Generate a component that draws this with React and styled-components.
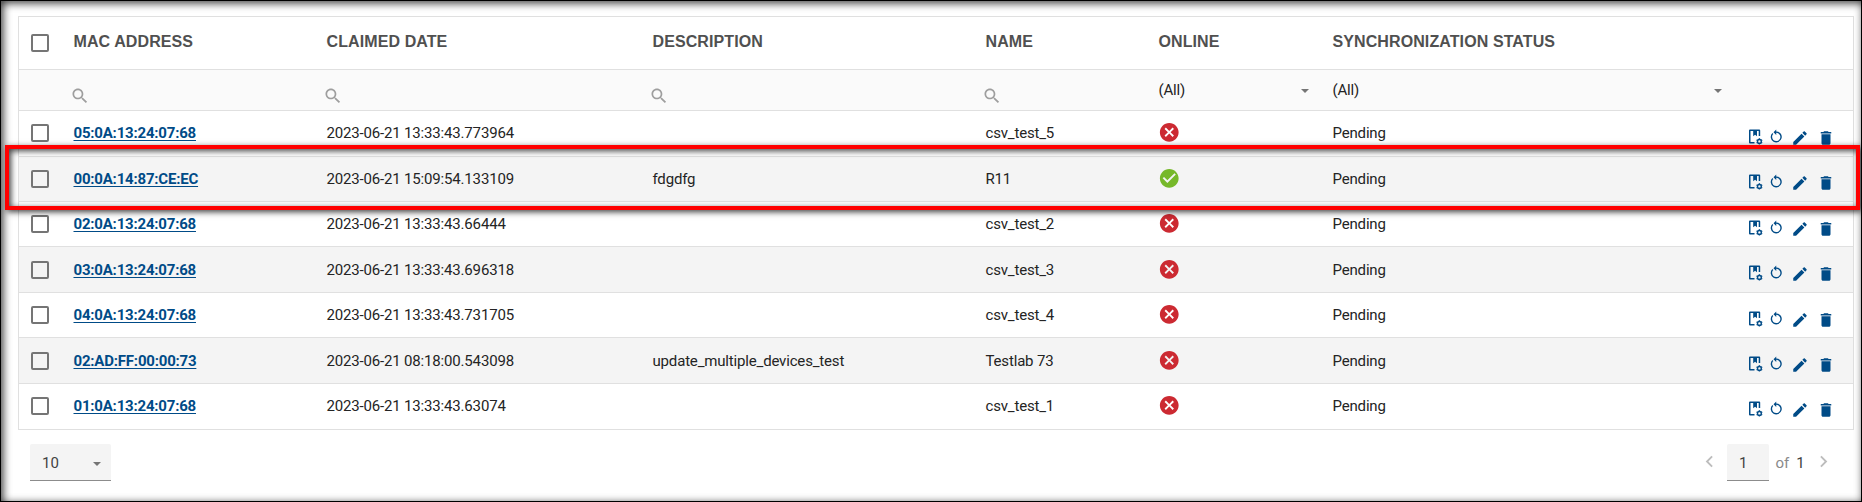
import React from 'react';
import styled, { createGlobalStyle } from 'styled-components';

const Global = createGlobalStyle`
  * { box-sizing: border-box; }
  body { margin: 0; background: #fff; font-family: Roboto, "Liberation Sans", sans-serif; font-size: 15px; color: #242424; }
`;

const Page = styled.main`
  position: relative;
  width: 1862px;
  height: 502px;
  padding: 16px 8px 0 18px;
  overflow: hidden;
`;

const Vignette = styled.div`
  position: absolute;
  inset: 0;
  pointer-events: none;
  border: 1px solid #000;
  box-shadow: inset 2px 2px 8px rgba(0, 0, 0, 0.8);
`;

const Highlight = styled.div`
  position: absolute;
  left: 5px;
  top: 145px;
  width: 1855px;
  height: 65px;
  border: 4px solid #f00;
  pointer-events: none;
  box-shadow: 2px 2px 6px rgba(0, 0, 0, 0.75), inset 2px 2px 6px rgba(0, 0, 0, 0.75);
`;

const Grid = styled.section`
  width: 1836px;
  border: 1px solid #e0e0e0;
`;

const Row = styled.div`
  display: grid;
  grid-template-columns: 42px 253px 326px 333px 173px 174px 407px 1fr;
  height: ${(p) => p.$height}px;
  background: ${(p) => p.$bg || '#fff'};
  border-bottom: ${(p) => (p.$last ? 0 : 1)}px solid #e0e0e0;
`;

const Cell = styled.div`
  padding: ${(p) => p.$top || 0}px 0 0 12.5px;
  line-height: 18px;
  letter-spacing: -0.17px;
  white-space: nowrap;
`;

const CheckCell = styled.div`
  padding: ${(p) => p.$top}px 0 0 12px;
`;

const Checkbox = styled.div`
  width: 18px;
  height: 18px;
  border: 2px solid #757575;
  border-radius: 2px;
`;

const Heading = styled(Cell)`
  font: 700 16px/18px "Liberation Sans", Arial, sans-serif;
  letter-spacing: 0.1px;
  color: #505050;
`;

const MacLink = styled.a`
  font-weight: 700;
  letter-spacing: -0.2px;
  color: #004b87;
  text-decoration: underline 1px;
  text-underline-offset: 2px;
`;

const SelectCell = styled(Cell)`
  display: flex;
  align-items: flex-start;
  justify-content: space-between;
  padding-right: ${(p) => p.$right}px;
`;

const Caret = styled.i`
  width: 0;
  height: 0;
  margin-top: 8px;
  border: 4px solid transparent;
  border-top-color: #757575;
  border-bottom: 0;
`;

const Glyph = styled.svg`
  display: block;
  flex: none;
  width: ${(p) => p.$size}px;
  height: ${(p) => p.$size}px;
  fill: ${(p) => p.$color};
`;

const SearchCell = styled.div`
  padding: 16px 0 0 8.5px;
`;

const StatusCell = styled.div`
  padding: ${(p) => p.$top}px 0 0 12px;
`;

const Actions = styled.div`
  display: flex;
  padding: ${(p) => p.$top}px 0 0 20.5px;
`;

const ActionSlot = styled.span`
  width: ${(p) => p.$width}px;
  padding-top: ${(p) => p.$drop || 0}px;
`;

const Pager = styled.footer`
  display: flex;
  justify-content: space-between;
  padding: 14px 19.5px 0 12px;
`;

const PageSize = styled.div`
  display: flex;
  justify-content: space-between;
  width: 81px;
  height: 37px;
  padding: 10px 10px 0 12px;
  line-height: 18px;
  color: #424242;
  background: #f4f4f4;
  border-bottom: 1px solid #8c8c8c;
  border-radius: 2px 2px 0 0;
`;

const PageNav = styled.div`
  display: flex;
  color: #424242;
  line-height: 18px;
`;

const PageInput = styled.div`
  width: 42px;
  height: 37px;
  margin: 0 6.5px;
  padding: 10px 0 0 12px;
  background: #f4f4f4;
  border-bottom: 1px solid #8c8c8c;
  border-radius: 2px 2px 0 0;
`;

const PageCount = styled.div`
  display: flex;
  gap: 7px;
  width: 36px;
  padding-top: 10px;
`;

const Muted = styled.span`
  color: #8a8a8a;
`;

const NavArrow = styled.div`
  padding-top: 6px;
`;

const paths = {
  search: 'M15.5 14h-.79l-.28-.27C15.41 12.59 16 11.11 16 9.5 16 5.91 13.09 3 9.5 3S3 5.91 3 9.5 5.91 16 9.5 16c1.61 0 3.09-.59 4.23-1.57l.27.28v.79l5 4.99L20.49 19l-4.99-5zm-6 0C7.01 14 5 11.99 5 9.5S7.01 5 9.5 5 14 7.01 14 9.5 11.99 14 9.5 14z',
  cancel: 'M12 2C6.47 2 2 6.47 2 12s4.47 10 10 10 10-4.47 10-10S17.53 2 12 2zm5 13.59L15.59 17 12 13.41 8.41 17 7 15.59 10.59 12 7 8.41 8.41 7 12 10.59 15.59 7 17 8.41 13.41 12 17 15.59z',
  check: 'M12 2C6.48 2 2 6.48 2 12s4.48 10 10 10 10-4.48 10-10S17.52 2 12 2zm-2 15l-5-5 1.41-1.41L10 14.17l7.59-7.59L19 8l-9 9z',
  restart: 'M12 5V2L8 6l4 4V7c3.31 0 6 2.69 6 6s-2.69 6-6 6-6-2.69-6-6c0-1.66.67-3.16 1.76-4.24L6.34 7.34A8 8 0 1 0 12 5z',
  edit: 'M3 17.25V21h3.75L17.81 9.94l-3.75-3.75L3 17.25zM20.71 7.04c.39-.39.39-1.02 0-1.41l-2.34-2.34c-.39-.39-1.02-.39-1.41 0l-1.83 1.83 3.75 3.75 1.83-1.83z',
  trash: 'M6 19c0 1.1.9 2 2 2h8c1.1 0 2-.9 2-2V7H6v12zM19 4h-3.5l-1-1h-5l-1 1H5v2h14V4z',
  left: 'M15.41 7.41L14 6l-6 6 6 6 1.41-1.41L10.83 12z',
  right: 'M10 6L8.59 7.41 13.17 12l-4.58 4.59L10 18l6-6z',
};

const Icon = ({ name, size, color }) => (
  <Glyph viewBox="0 0 24 24" $size={size} $color={color}>
    <path d={paths[name]} />
  </Glyph>
);

const ProfileIcon = () => (
  <Glyph viewBox="0 0 16 16" $size={16} $color="#004b87">
    <path d="M2 .5h9.2q1 0 1 1V7h-1.5V2H9v5.2L7.1 5.8 5.2 7.2V2H2.5v11h4v1.5H2q-1 0-1-1v-12q0-1 1-1z" />
    <g fill="none" stroke="#004b87">
      <circle cx="11.4" cy="12.4" r="1.9" strokeWidth="1.4" />
      <path strokeWidth="1.4" d="M11.4 9.2v1M11.4 14.6v1M8.6 10.8l.9.5M13.3 13.5l.9.5M8.6 14l.9-.5M13.3 11.3l.9-.5" />
    </g>
  </Glyph>
);

const rows = [
  { mac: '05:0A:13:24:07:68', date: '2023-06-21 13:33:43.773964', name: 'csv_test_5', height: 46, top: 13, act: 17 },
  { mac: '00:0A:14:87:CE:EC', date: '2023-06-21 15:09:54.133109', desc: 'fdgdfg', name: 'R11', online: true, height: 45, top: 13, act: 16 },
  { mac: '02:0A:13:24:07:68', date: '2023-06-21 13:33:43.66444', name: 'csv_test_2', height: 45, top: 13, act: 17 },
  { mac: '03:0A:13:24:07:68', date: '2023-06-21 13:33:43.696318', name: 'csv_test_3', height: 46, top: 14, act: 17 },
  { mac: '04:0A:13:24:07:68', date: '2023-06-21 13:33:43.731705', name: 'csv_test_4', height: 45, top: 13, act: 17 },
  { mac: '02:AD:FF:00:00:73', date: '2023-06-21 08:18:00.543098', desc: 'update_multiple_devices_test', name: 'Testlab 73', height: 46, top: 14, act: 17 },
  { mac: '01:0A:13:24:07:68', date: '2023-06-21 13:33:43.63074', name: 'csv_test_1', height: 45, top: 13, act: 16 },
];

const headings = ['MAC ADDRESS', 'CLAIMED DATE', 'DESCRIPTION', 'NAME', 'ONLINE', 'SYNCHRONIZATION STATUS'];

const DeviceRow = ({ row, index }) => (
  <Row $height={row.height} $last={index === rows.length - 1} $bg={index % 2 ? '#f4f4f4' : '#fff'}>
    <CheckCell $top={row.top}><Checkbox /></CheckCell>
    <Cell $top={row.top}><MacLink>{row.mac}</MacLink></Cell>
    <Cell $top={row.top}>{row.date}</Cell>
    <Cell $top={row.top}>{row.desc}</Cell>
    <Cell $top={row.top}>{row.name}</Cell>
    <StatusCell $top={row.top - 3.5}>
      <Icon name={row.online ? 'check' : 'cancel'} size={22.5} color={row.online ? '#76b82a' : '#cc2a32'} />
    </StatusCell>
    <Cell $top={row.top}>Pending</Cell>
    <Actions $top={row.act}>
      <ActionSlot $width={20} $drop={1}><ProfileIcon /></ActionSlot>
      <ActionSlot $width={23}><Icon name="restart" size={16.5} color="#004b87" /></ActionSlot>
      <ActionSlot $width={26} $drop={1}><Icon name="edit" size={18} color="#004b87" /></ActionSlot>
      <ActionSlot $width={18} $drop={1}><Icon name="trash" size={18} color="#004b87" /></ActionSlot>
    </Actions>
  </Row>
);

export default function App() {
  return (
    <Page>
      <Global />
      <Grid>
        <Row $height={53}>
          <CheckCell $top={17}><Checkbox /></CheckCell>
          {headings.map((h) => <Heading key={h} $top={16}>{h}</Heading>)}
        </Row>
        <Row $height={41} $bg="#fafafa">
          <span />
          {[0, 1, 2, 3].map((n) => (
            <SearchCell key={n}><Icon name="search" size={20} color="#9e9e9e" /></SearchCell>
          ))}
          <SelectCell $top={11} $right={11}>(All)<Caret /></SelectCell>
          <SelectCell $top={11} $right={5}>(All)<Caret /></SelectCell>
        </Row>
        {rows.map((row, i) => <DeviceRow key={row.mac} row={row} index={i} />)}
      </Grid>
      <Pager>
        <PageSize>10<Caret /></PageSize>
        <PageNav>
          <NavArrow><Icon name="left" size={23} color="#bdbdbd" /></NavArrow>
          <PageInput>1</PageInput>
          <PageCount><Muted>of</Muted>1</PageCount>
          <NavArrow><Icon name="right" size={23} color="#bdbdbd" /></NavArrow>
        </PageNav>
      </Pager>
      <Vignette />
      <Highlight />
    </Page>
  );
}
